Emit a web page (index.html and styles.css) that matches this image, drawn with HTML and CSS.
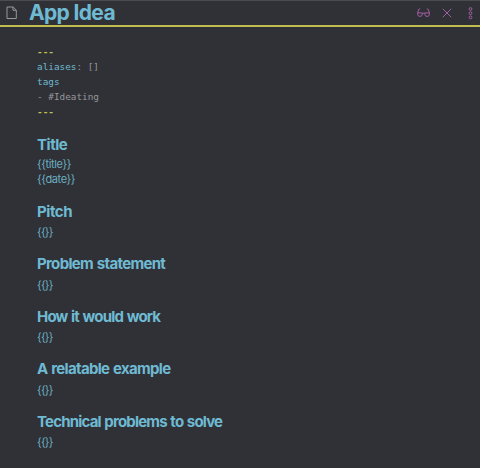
FILE: index.html
```html
<!DOCTYPE html>
<html lang="en">
<head>
<meta charset="utf-8">
<title>App Idea</title>
<link rel="stylesheet" href="styles.css">
</head>
<body>
<div class="pane">
<header class="header">
<svg class="file" width="12" height="14" viewBox="0 0 12 14"><path d="M1 1H7.2L10.3 4.1V12.5H1ZM7 1V4.3H10.3"/></svg>
<h1 class="name">App Idea</h1>
<nav class="actions">
<svg width="13" height="10" viewBox="0 0 13 10"><path d="M3.2.9Q1.9.6 1.5 1.8L.7 5M9.8.9Q11.1.6 11.5 1.8L12.3 5M.6 4.9H5.2V6.2A2.25 2.25 0 0 1 .7 6.2ZM7.8 4.9H12.4V6.2A2.25 2.25 0 0 1 7.8 6.2ZM5.2 5.3H7.8"/></svg>
<svg width="10" height="10" viewBox="0 0 10 10"><path d="M.8.8 9.2 9.2M9.2.8.8 9.2"/></svg>
<svg width="5" height="13" viewBox="0 0 5 13"><circle cx="2.5" cy="2" r="1.4"/><circle cx="2.5" cy="6.2" r="1.4"/><circle cx="2.5" cy="10.4" r="1.4"/></svg>
</nav>
</header>
<main class="note">
<div class="meta">
<div class="rule">---</div>
<div><span class="key">aliases</span>: []</div>
<div class="key">tags</div>
<div>- #Ideating</div>
<div class="rule">---</div>
</div>
<section class="intro"><h2 class="short">Title</h2><p>{{title}}</p><p>{{date}}</p></section>
<section><h2 class="short">Pitch</h2><p class="slot">{{}}</p></section>
<section><h2 class="loose">Problem statement</h2><p class="slot">{{}}</p></section>
<section><h2>How it would work</h2><p class="slot">{{}}</p></section>
<section><h2 class="loose">A relatable example</h2><p class="slot">{{}}</p></section>
<section><h2>Technical problems to solve</h2><p class="slot">{{}}</p></section>
</main>
</div>
</body>
</html>
```
FILE: styles.css
```css
* { box-sizing: border-box; }
body { margin: 0; background: #303136; font-family: Inter, sans-serif; color: #6fbad3; }
.pane { height: 468px; overflow: hidden; border-top: 1px solid #4b4c50; }
.header { height: 26px; display: flex; align-items: center; border-bottom: 2px solid #c2bd50; padding: 0 7px 0 6px; }
svg { display: block; fill: none; stroke: #a05fa3; stroke-width: 1; }
.file { stroke: #96979a; flex: none; }
.name { margin: 0 0 0 11px; font-size: 21px; line-height: 24px; font-weight: 650; letter-spacing: -.65px; white-space: nowrap; }
.actions { margin-left: auto; display: flex; align-items: center; gap: 13px; }
.actions svg:first-child { margin-right: -1px; }
.actions svg:last-child { margin-left: 3px; }
.note { padding: 17px 37px 0; }
.meta { font: 9.35px/15px "DejaVu Sans Mono", monospace; color: #95979a; padding-bottom: .6px; }
.meta .key { color: #6fbad3; }
.meta .rule { color: #c4c155; font-weight: 700; }
section { padding-top: 14.3px; height: 52.5px; }
.intro { height: 67px; }
h2 { margin: 0 0 2.5px; font-size: 15px; line-height: 21px; font-weight: 700; letter-spacing: -.81px; word-spacing: .8px; white-space: nowrap; }
.loose { letter-spacing: -.67px; }
.short { letter-spacing: -.45px; }
p { margin: 0; font-size: 11px; line-height: 15px; letter-spacing: -.4px; color: #6baec2; }
.slot { letter-spacing: -.8px; line-height: 16px; }
```
